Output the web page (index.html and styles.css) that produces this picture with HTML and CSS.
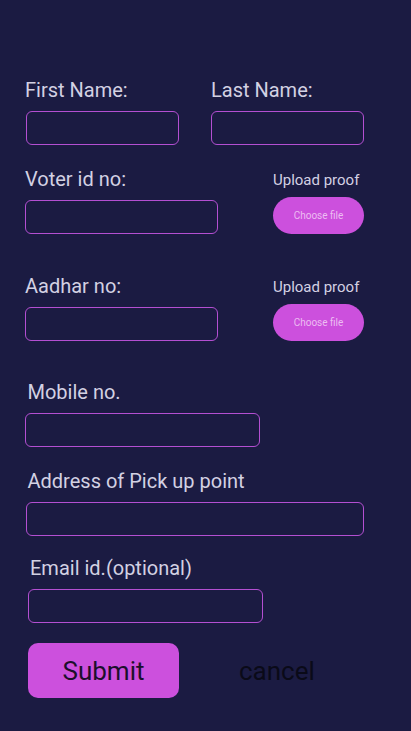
FILE: index.html
```html
<!DOCTYPE html>
<html lang="en">
<head>
<meta charset="utf-8">
<title>Registration form</title>
<link rel="stylesheet" href="styles.css">
</head>
<body>
<main class="form">
  <div class="row row-name">
    <div class="field field-first">
      <label class="label">First Name:</label>
      <input class="input input-first" type="text">
    </div>
    <div class="field field-last">
      <label class="label">Last Name:</label>
      <input class="input input-last" type="text">
    </div>
  </div>

  <div class="row row-doc row-voter">
    <div class="field">
      <label class="label">Voter id no:</label>
      <input class="input input-doc" type="text">
    </div>
    <div class="upload">
      <span class="upload-label">Upload proof</span>
      <button class="choose" type="button">Choose file</button>
    </div>
  </div>

  <div class="row row-doc row-aadhar">
    <div class="field">
      <label class="label">Aadhar no:</label>
      <input class="input input-doc" type="text">
    </div>
    <div class="upload">
      <span class="upload-label">Upload proof</span>
      <button class="choose" type="button">Choose file</button>
    </div>
  </div>

  <div class="row row-mobile">
    <div class="field">
      <label class="label label-mobile">Mobile no.</label>
      <input class="input input-mobile" type="text">
    </div>
  </div>

  <div class="row row-address">
    <div class="field">
      <label class="label label-address">Address of Pick up point</label>
      <input class="input input-address" type="text">
    </div>
  </div>

  <div class="row row-email">
    <div class="field field-email">
      <label class="label label-email">Email id.(optional)</label>
      <input class="input input-email" type="text">
    </div>
  </div>

  <div class="row actions">
    <button class="submit" type="button">Submit</button>
    <button class="cancel" type="button">cancel</button>
  </div>
</main>
</body>
</html>
```

FILE: styles.css
```css
html, body {
  margin: 0;
  padding: 0;
  background: #1b1b42;
}

body {
  font-family: Roboto, "Noto Sans", sans-serif;
  width: 411px;
  height: 731px;
  overflow: hidden;
}

.form {
  padding-top: 79px;
}

.row {
  display: flex;
  align-items: flex-start;
}

.field {
  display: flex;
  flex-direction: column;
  align-items: flex-start;
}

.label {
  font-size: 20px;
  line-height: 23px;
  height: 23px;
  color: #d3d1e3;
  margin-bottom: 9px;
  white-space: nowrap;
}

.input {
  box-sizing: border-box;
  height: 34px;
  margin: 0;
  padding: 0 8px;
  background: transparent;
  border: 1px solid #b44fd2;
  border-radius: 6px;
  outline: none;
}

/* Row 1: names */
.row-name {
  padding-left: 26px;
}
.field-first .label {
  margin-left: -1px;
}
.input-first {
  width: 153px;
}
.field-last {
  margin-left: 32px;
}
.field-last .label {
  margin-left: 0;
}
.input-last {
  width: 153px;
}

/* Rows 2-3: documents */
.row-doc {
  padding-left: 25px;
}
.row-voter {
  margin-top: 22.7px;
}
.row-aadhar {
  margin-top: 41px;
}
.row-doc .label {
  margin-left: 0;
}
.input-doc {
  width: 193px;
}

.upload {
  display: flex;
  flex-direction: column;
  align-items: flex-start;
  margin-left: 55px;
  padding-top: 1px;
}
.upload-label {
  font-size: 15px;
  line-height: 23px;
  height: 23px;
  color: #d3d1e3;
  white-space: nowrap;
}
.choose {
  margin-top: 5px;
  width: 91px;
  height: 37px;
  border: none;
  border-radius: 19px;
  background: #cc50dd;
  color: #ecbdf2;
  font-family: Roboto, "Noto Sans", sans-serif;
  font-size: 10px;
  padding: 0;
}

/* Mobile */
.row-mobile {
  padding-left: 25px;
  margin-top: 40.6px;
}
.label-mobile {
  margin-left: 2.5px;
}
.input-mobile {
  width: 235px;
}

/* Address */
.row-address {
  padding-left: 26px;
  margin-top: 22.3px;
}
.label-address {
  margin-left: 1.5px;
}
.input-address {
  width: 338px;
}

/* Email */
.row-email {
  padding-left: 28px;
  margin-top: 21.5px;
}
.label-email {
  margin-left: 2px;
}
.input-email {
  width: 235px;
}

/* Actions */
.actions {
  padding-left: 28px;
  margin-top: 20px;
  align-items: center;
}
.submit {
  width: 151px;
  height: 55px;
  border: none;
  border-radius: 10px;
  background: #cc50dd;
  color: #1c0f2c;
  font-family: Roboto, "Noto Sans", sans-serif;
  font-size: 26px;
  padding: 0;
}
.cancel {
  margin-left: 60px;
  background: transparent;
  border: none;
  padding: 0;
  color: #0a0a18;
  font-family: Roboto, "Noto Sans", sans-serif;
  font-size: 26px;
}
```
